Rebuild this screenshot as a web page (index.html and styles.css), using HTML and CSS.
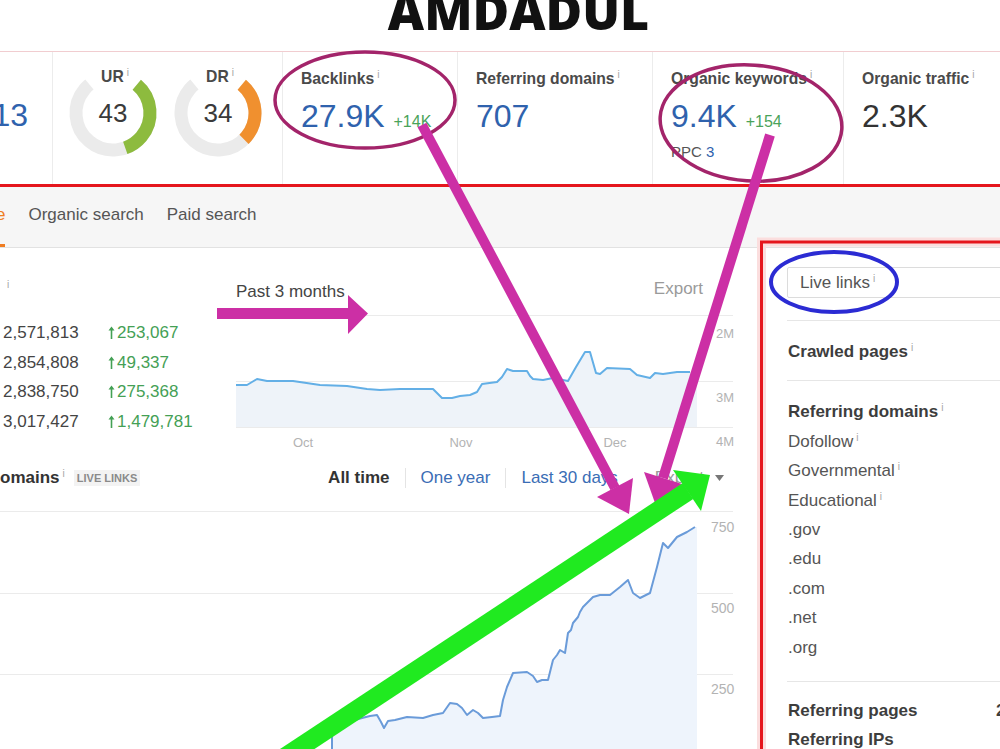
FILE: index.html
```html
<!DOCTYPE html>
<html lang="en">
<head>
  <meta charset="UTF-8">
  <meta name="viewport" content="width=device-width, initial-scale=1.0">
  <title>AMDADUL - Site overview</title>
  <link rel="stylesheet" href="styles.css">
</head>
<body>
  <h1 class="title">AMDADUL</h1>

  <div class="metrics">
    <div class="metric metric-cut">
      <div class="value">13</div>
    </div>
    <div class="metric metric-gauges">
      <div class="gauge">
        <svg class="gauge-ring" width="90" height="90" viewBox="0 0 90 90">
          <circle class="track" cx="45" cy="45" r="37" stroke-dasharray="180.8 232.5" transform="rotate(-50 45 45)"/>
          <circle class="arc-ur" cx="45" cy="45" r="37" stroke-dasharray="77.8 232.5" transform="rotate(-50 45 45)"/>
        </svg>
        <span class="gauge-label">UR<span class="info">i</span></span>
        <span class="gauge-value">43</span>
      </div>
      <div class="gauge">
        <svg class="gauge-ring" width="90" height="90" viewBox="0 0 90 90">
          <circle class="track" cx="45" cy="45" r="37" stroke-dasharray="180.8 232.5" transform="rotate(-50 45 45)"/>
          <circle class="arc-dr" cx="45" cy="45" r="37" stroke-dasharray="61.5 232.5" transform="rotate(-50 45 45)"/>
        </svg>
        <span class="gauge-label">DR<span class="info">i</span></span>
        <span class="gauge-value">34</span>
      </div>
    </div>
    <div class="metric metric-backlinks">
      <div class="label">Backlinks<span class="info">i</span></div>
      <div class="value">27.9K <span class="delta">+14K</span></div>
    </div>
    <div class="metric metric-domains">
      <div class="label">Referring domains<span class="info">i</span></div>
      <div class="value">707</div>
    </div>
    <div class="metric metric-keywords">
      <div class="label">Organic keywords<span class="info">i</span></div>
      <div class="value">9.4K <span class="delta">+154</span></div>
      <div class="sub">PPC <span class="link">3</span></div>
    </div>
    <div class="metric metric-traffic">
      <div class="label">Organic traffic<span class="info">i</span></div>
      <div class="value dark">2.3K</div>
    </div>
  </div>

  <div class="tabs">
    <span class="tab active">e</span>
    <span class="tab">Organic search</span>
    <span class="tab">Paid search</span>
  </div>

  <div class="report">
    <div class="main">
      <section class="overview">
        <div class="overview-head"><span class="cut-label"><span class="info">i</span></span></div>
        <div class="overview-head chart-head">
          <span class="range">Past 3 months</span>
          <span class="export">Export</span>
        </div>

        <div class="stats">
          <div class="stats-row"><span>2,571,813</span><span class="up"><svg class="up-arrow" width="7" height="13" viewBox="0 0 7 13"><path d="M3.5 13V2"/><path class="head" d="M0.5 4.5L3.5 0.5L6.5 4.5Z"/></svg>253,067</span></div>
          <div class="stats-row"><span>2,854,808</span><span class="up"><svg class="up-arrow" width="7" height="13" viewBox="0 0 7 13"><path d="M3.5 13V2"/><path class="head" d="M0.5 4.5L3.5 0.5L6.5 4.5Z"/></svg>49,337</span></div>
          <div class="stats-row"><span>2,838,750</span><span class="up"><svg class="up-arrow" width="7" height="13" viewBox="0 0 7 13"><path d="M3.5 13V2"/><path class="head" d="M0.5 4.5L3.5 0.5L6.5 4.5Z"/></svg>275,368</span></div>
          <div class="stats-row"><span>3,017,427</span><span class="up"><svg class="up-arrow" width="7" height="13" viewBox="0 0 7 13"><path d="M3.5 13V2"/><path class="head" d="M0.5 4.5L3.5 0.5L6.5 4.5Z"/></svg>1,479,781</span></div>
        </div>

        <svg class="chart chart-small" width="504" height="150" viewBox="236 300 504 150">
          <g class="grid">
            <line x1="236" y1="315.5" x2="733" y2="315.5"/>
            <line x1="236" y1="381.5" x2="733" y2="381.5"/>
            <line x1="236" y1="427.5" x2="733" y2="427.5"/>
          </g>
          <path class="area" d="M236,385 L247,385 L252,382 L257,379 L262,380 L267,381 L293,381 L320,385 L347,386 L367,389 L380,390 L400,389 L433,389 L437,393 L442,398 L452,398 L460,396 L470,395 L477,392 L482,384 L497,382 L502,377 L507,369 L513,371 L527,371 L530,376 L533,379 L543,380 L553,378 L563,380 L568,381 L576,367 L585,352 L590,352 L596,373 L600,374 L607,368 L630,369 L637,375 L650,378 L655,373 L663,374 L677,372 L697,372 L697,427 L236,427 Z"/>
          <path class="line" d="M236,385 L247,385 L252,382 L257,379 L262,380 L267,381 L293,381 L320,385 L347,386 L367,389 L380,390 L400,389 L433,389 L437,393 L442,398 L452,398 L460,396 L470,395 L477,392 L482,384 L497,382 L502,377 L507,369 L513,371 L527,371 L530,376 L533,379 L543,380 L553,378 L563,380 L568,381 L576,367 L585,352 L590,352 L596,373 L600,374 L607,368 L630,369 L637,375 L650,378 L655,373 L663,374 L677,372 L690,372"/>
          <g class="axis">
            <text x="716" y="338">2M</text>
            <text x="716" y="402">3M</text>
            <text x="716" y="446">4M</text>
            <text x="303" y="447" text-anchor="middle">Oct</text>
            <text x="461" y="447" text-anchor="middle">Nov</text>
            <text x="615" y="447" text-anchor="middle">Dec</text>
          </g>
        </svg>
      </section>

      <section class="domains">
        <div class="domains-head">
          <span class="domains-title">omains<span class="info">i</span></span>
          <span class="badge">LIVE LINKS</span>
          <div class="periods">
            <span class="period current">All time</span>
            <span class="sep"></span>
            <span class="period">One year</span>
            <span class="sep"></span>
            <span class="period">Last 30 days</span>
            <span class="export">Export</span>
            <svg class="caret" width="9" height="6" viewBox="0 0 9 6"><path d="M0 0H9L4.5 6Z"/></svg>
          </div>
        </div>

        <svg class="chart" width="752" height="260" viewBox="0 489 752 260">
          <g class="grid">
            <line x1="0" y1="511.5" x2="733" y2="511.5"/>
            <line x1="0" y1="593.5" x2="733" y2="593.5"/>
            <line x1="0" y1="674.5" x2="733" y2="674.5"/>
          </g>
          <path class="area area-rd" d="M332,760 L332,727 L340,726 L347,725 L355,720 L362,718 L370,716 L377,715 L381,722 L384,728 L388,721 L395,720 L407,717 L423,718 L433,715 L443,713 L450,703 L457,704 L462,708 L467,715 L473,710 L478,713 L483,718 L492,717 L500,716 L503,700 L507,687 L513,673 L527,672 L533,676 L537,682 L542,680 L548,680 L553,660 L557,655 L560,650 L565,653 L568,633 L571,630 L573,623 L578,617 L580,612 L583,607 L590,600 L593,597 L600,595 L610,595 L620,587 L628,580 L633,593 L640,598 L650,593 L657,567 L663,543 L668,548 L677,537 L687,532 L695,527 L697,527 L697,760 Z"/>
          <path class="line line-rd" d="M332,760 L332,727 L340,726 L347,725 L355,720 L362,718 L370,716 L377,715 L381,722 L384,728 L388,721 L395,720 L407,717 L423,718 L433,715 L443,713 L450,703 L457,704 L462,708 L467,715 L473,710 L478,713 L483,718 L492,717 L500,716 L503,700 L507,687 L513,673 L527,672 L533,676 L537,682 L542,680 L548,680 L553,660 L557,655 L560,650 L565,653 L568,633 L571,630 L573,623 L578,617 L580,612 L583,607 L590,600 L593,597 L600,595 L610,595 L620,587 L628,580 L633,593 L640,598 L650,593 L657,567 L663,543 L668,548 L677,537 L687,532 L695,527"/>
          <g class="axis axis-rd">
            <text x="711" y="532">750</text>
            <text x="711" y="613">500</text>
            <text x="711" y="694">250</text>
          </g>
        </svg>
      </section>
    </div>

    <aside class="side">
      <div class="filter">Live links<span class="info">i</span></div>
      <div class="side-group">
        <div class="row head">Crawled pages<span class="info">i</span></div>
      </div>
      <div class="side-group group-domains">
        <div class="row head">Referring domains<span class="info">i</span></div>
        <div class="row">Dofollow<span class="info">i</span></div>
        <div class="row">Governmental<span class="info">i</span></div>
        <div class="row">Educational<span class="info">i</span></div>
        <div class="row">.gov</div>
        <div class="row">.edu</div>
        <div class="row">.com</div>
        <div class="row">.net</div>
        <div class="row">.org</div>
      </div>
      <div class="side-group group-pages">
        <div class="row head"><span>Referring pages</span><span class="count">2</span></div>
        <div class="row head">Referring IPs</div>
      </div>
    </aside>
  </div>

  <!-- hand-drawn highlights on top of the report -->
  <svg class="marks" width="1000" height="749" viewBox="0 0 1000 749">
    <g class="frame-glow">
      <polyline points="1000,242 761.5,242 761.5,749"/>
    </g>
    <g class="frame">
      <line x1="0" y1="185.5" x2="1000" y2="185.5"/>
      <polyline points="1000,242 761.5,242 761.5,749"/>
    </g>
    <ellipse class="circle-mark" cx="365" cy="100" rx="90" ry="48"/>
    <ellipse class="circle-mark" cx="751" cy="123" rx="91" ry="58" transform="rotate(4 751 123)"/>
    <ellipse class="circle-blue" cx="834" cy="282" rx="63" ry="30"/>
    <g class="pointer">
      <polygon points="217,308 348,308 348,295 368,313.5 348,334 348,319 217,319"/>
      <line x1="422" y1="125" x2="615" y2="488"/>
      <polygon points="629,514 597,497 633,478"/>
      <line x1="770" y1="135" x2="663" y2="478"/>
      <polygon points="655,503 682,484 644,472"/>
    </g>
    <g class="growth">
      <line x1="270" y1="767" x2="688" y2="491"/>
      <polygon points="710,475 701,511 673,470"/>
    </g>
  </svg>
</body>
</html>
```

FILE: styles.css
```css
* {
  box-sizing: border-box;
}
html,
body {
  margin: 0;
  width: 1000px;
  height: 749px;
  overflow: hidden;
  background: #fff;
}
body {
  position: relative;
  font-family: "Liberation Sans", Arial, sans-serif;
  color: #555;
}

.title {
  margin: 0;
  height: 51px;
  padding-left: 37px;
  text-align: center;
  font-family: "Open Sans", sans-serif;
  font-weight: 800;
  font-size: 50px;
  line-height: 23px;
  color: #111;
}

.info {
  font-size: 10px;
  font-weight: normal;
  line-height: 0;
  color: #a5a5a5;
  vertical-align: 6px;
  margin-left: 3px;
}

/* top metrics strip */
.metrics {
  display: flex;
  height: 133px;
  border-top: 1px solid #f1cdd0;
}
.metric {
  flex: none;
  padding: 18px 0 0 18px;
  border-right: 1px solid #ececec;
  overflow: hidden;
  white-space: nowrap;
}
.metric-cut {
  width: 53px;
  display: flex;
  justify-content: flex-end;
  align-items: flex-start;
  padding: 45px 24px 0 0;
}
.metric-gauges {
  width: 230px;
  display: flex;
  gap: 15px;
  padding: 16px 0 0 15px;
}
.metric-backlinks { width: 175px; }
.metric-domains { width: 195px; }
.metric-keywords { width: 191px; }
.metric-traffic {
  flex: 1;
  border-right: none;
}
.label {
  font-weight: bold;
  font-size: 15.7px;
  line-height: 18px;
  color: #4a4a4a;
}
.value {
  margin-top: 10px;
  font-size: 32px;
  line-height: 36px;
  color: #2f62ad;
}
.value.dark {
  color: #333;
}
.metric-cut .value {
  flex: none;
  margin-top: 0;
}
.delta {
  font-size: 16px;
  color: #4aa35a;
}
.sub {
  margin-top: 3px;
  font-size: 15px;
  line-height: 18px;
  color: #555;
}
.link {
  color: #2f62ad;
}

.gauge {
  display: grid;
  width: 90px;
  height: 90px;
}
.gauge > * {
  grid-area: 1 / 1;
}
.gauge-ring circle {
  fill: none;
  stroke-width: 13;
}
.gauge-ring .track { stroke: #ebebeb; }
.gauge-ring .arc-ur { stroke: #8dbb3e; }
.gauge-ring .arc-dr { stroke: #f0902f; }
.gauge-label {
  align-self: start;
  justify-self: center;
  margin-top: 0;
  padding-left: 4px;
  font-weight: bold;
  font-size: 15.7px;
  line-height: 18px;
  color: #4a4a4a;
}
.gauge-value {
  align-self: center;
  justify-self: center;
  font-size: 26px;
  line-height: 26px;
  color: #3a3a3a;
}

/* report tabs */
.tabs {
  display: flex;
  gap: 23px;
  height: 64px;
  background: #f6f6f6;
  border-bottom: 1px solid #e2e2e2;
  font-size: 17px;
  color: #555;
}
.tab {
  display: flex;
  align-items: center;
  padding-top: 2px;
  border-bottom: 3px solid transparent;
}
.tab.active {
  margin-left: -4px;
  color: #ef7d22;
  border-bottom-color: #ef7d22;
}

.report {
  display: flex;
}
.main {
  flex: none;
  width: 752px;
  padding-top: 30px;
}

.overview {
  display: grid;
  grid-template-columns: 236px 516px;
}
.overview-head {
  height: 22px;
  line-height: 22px;
  font-size: 17px;
  color: #444;
}
.cut-label {
  padding-left: 4px;
}
.chart-head {
  display: flex;
  justify-content: space-between;
  padding-right: 49px;
}
.range {
  padding-top: 3px;
}
.export {
  color: #9a9a9a;
}

.stats {
  margin-top: 18px;
  padding-left: 3px;
}
.stats-row {
  display: grid;
  grid-template-columns: 105px auto;
  height: 29.5px;
  line-height: 29.5px;
  font-size: 17px;
  color: #444;
}
.stats-row .up {
  color: #44a055;
}
.up-arrow {
  margin-right: 2px;
  vertical-align: -1px;
}
.up-arrow path {
  stroke: #44a055;
  stroke-width: 1.6;
  fill: none;
}
.up-arrow .head {
  fill: #44a055;
  stroke: none;
}

.chart {
  display: block;
}
.chart .grid line {
  stroke: #ebebeb;
  stroke-width: 1;
}
.chart .area {
  fill: #eef3f9;
}
.chart .line {
  fill: none;
  stroke: #63afe6;
  stroke-width: 2;
  stroke-linejoin: round;
}
.chart .area-rd {
  fill: #eef4fc;
}
.chart .line-rd {
  stroke: #6a9bd9;
}
.axis text {
  font-family: "Liberation Sans", Arial, sans-serif;
  font-size: 13px;
  fill: #b3b3b3;
}
.axis-rd text {
  font-size: 14px;
}

.domains {
  padding-top: 17px;
}
.domains-head {
  display: flex;
  align-items: center;
  height: 22px;
  padding-right: 28px;
  font-size: 17px;
}
.domains-title {
  font-weight: bold;
  color: #333;
}
.badge {
  margin-left: 9px;
  padding: 2px 3px;
  background: #f3f3f3;
  font-size: 11px;
  font-weight: bold;
  color: #8a8a8a;
}
.periods {
  display: flex;
  align-items: center;
  margin-left: auto;
}
.period {
  color: #3a6db5;
}
.period.current {
  font-weight: bold;
  color: #333;
}
.sep {
  width: 1px;
  height: 20px;
  margin: 0 15px;
  background: #e4e4e4;
}
.periods .export {
  margin-left: 37px;
}
.caret {
  margin-left: 11px;
}
.caret path {
  fill: #777;
}

/* right filter panel */
.side {
  flex: none;
  width: 238px;
  margin-left: 10px;
  padding: 19px 0 0 25px;
}
.filter {
  width: 260px;
  height: 31px;
  padding-left: 12px;
  border: 1px solid #dcdcdc;
  border-radius: 2px;
  font-size: 17px;
  line-height: 29px;
  color: #555;
}
.side-group {
  margin-top: 22px;
  padding: 16px 0 14px 1px;
  border-top: 1px solid #e6e6e6;
}
.side-group + .side-group {
  margin-top: 0;
}
.group-domains {
  padding-bottom: 19px;
}
.group-pages {
  padding-top: 14px;
}
.row {
  height: 29.4px;
  line-height: 29.4px;
  font-size: 17px;
  color: #555;
  white-space: nowrap;
}
.row.head {
  font-weight: bold;
  color: #3d3d3d;
}
.group-pages .row:first-child {
  display: grid;
  grid-template-columns: 208px auto;
}

/* annotation layer */
.marks {
  position: absolute;
  top: 0;
  left: 0;
  pointer-events: none;
}
.frame-glow polyline {
  fill: none;
  stroke: #fbdede;
  stroke-width: 9;
}
.frame line,
.frame polyline {
  fill: none;
  stroke: #e5161d;
  stroke-width: 3;
}
.circle-mark {
  fill: none;
  stroke: #a3246a;
  stroke-width: 3.5;
}
.circle-blue {
  fill: none;
  stroke: #2b2bd3;
  stroke-width: 4;
}
.pointer line {
  stroke: #cc2fa5;
  stroke-width: 10;
}
.pointer polygon {
  fill: #cc2fa5;
}
.growth line {
  stroke: #20ea20;
  stroke-width: 19;
}
.growth polygon {
  fill: #20ea20;
}
```
